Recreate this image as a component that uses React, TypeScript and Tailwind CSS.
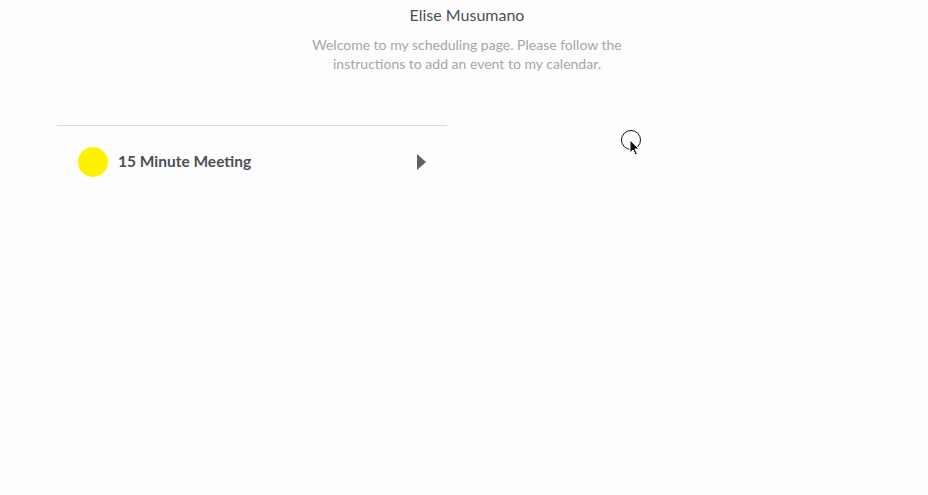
export default function App() {
  return (
    <div
      className="relative h-[495px] w-full overflow-hidden bg-[#fdfdfd]"
      style={{ fontFamily: "Lato, 'Liberation Sans', sans-serif" }}
    >
      <div className="ml-[57px] w-[820px]">
        <div className="flex flex-col items-center pt-[5px]">
          <h1 className="text-[16px] leading-[20px] text-[#4d5055]">Elise Musumano</h1>
          <p className="mt-[10px] w-[340px] text-center text-[14px] leading-[19px] text-[#a6a6a6]">
            Welcome to my scheduling page. Please follow the instructions to add an event to my calendar.
          </p>
        </div>
        <ul className="mt-[52px] w-[390px] border-t border-[#d9d9d9]">
          <li className="flex h-[72px] items-center pl-[21px] pr-[21px]">
            <span className="h-[30px] w-[30px] rounded-full bg-[#fff200]" />
            <span className="ml-[10px] flex-1 text-[15.5px] font-bold text-[#4d5055]">15 Minute Meeting</span>
            <svg width="9" height="16" viewBox="0 0 9 16" className="text-[#5e6268]">
              <path d="M0 0 L9 8 L0 16 Z" fill="currentColor" />
            </svg>
          </li>
        </ul>
      </div>
      <svg className="absolute left-[620px] top-[129px]" width="26" height="30" viewBox="0 0 26 30">
        <circle cx="11" cy="11" r="9.5" fill="none" stroke="#111" strokeWidth="1" />
        <path d="M10 11 L10 24 L13 21 L15.5 26 L17.5 25 L15 20 L19 20 Z" fill="#111" stroke="#fff" strokeWidth="1" />
      </svg>
    </div>
  );
}
